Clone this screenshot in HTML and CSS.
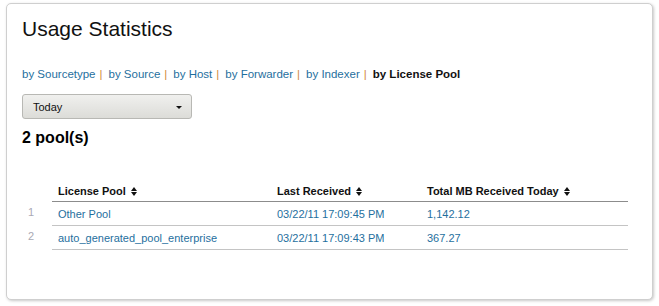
FILE: index.html
```html
<!DOCTYPE html>
<html lang="en">
<head>
  <meta charset="UTF-8">
  <title>Usage Statistics</title>
  <link rel="stylesheet" href="styles.css">
</head>
<body>
  <div class="panel">
    <h1>Usage Statistics</h1>

    <div class="views"><a href="#">by Sourcetype</a><span class="sep">|</span><a href="#">by Source</a><span class="sep">|</span><a href="#">by Host</a><span class="sep">|</span><a href="#">by Forwarder</a><span class="sep">|</span><a href="#">by Indexer</a><span class="sep">|</span><span class="current">by License Pool</span></div>

    <div class="dropdown">
      <span>Today</span>
      <span class="caret"></span>
    </div>

    <h2>2 pool(s)</h2>

    <table class="results">
      <thead>
        <tr>
          <th class="num"></th>
          <th class="c1">License Pool <svg class="sort" width="6" height="9" viewBox="0 0 6 9"><path d="M0 4L3 0L6 4Z M0 5L3 9L6 5Z" fill="#111"/></svg></th>
          <th class="c2">Last Received <svg class="sort" width="6" height="9" viewBox="0 0 6 9"><path d="M0 4L3 0L6 4Z M0 5L3 9L6 5Z" fill="#111"/></svg></th>
          <th class="c3">Total MB Received Today <svg class="sort" width="6" height="9" viewBox="0 0 6 9"><path d="M0 4L3 0L6 4Z M0 5L3 9L6 5Z" fill="#111"/></svg></th>
        </tr>
      </thead>
      <tbody>
        <tr>
          <td class="num">1</td>
          <td>Other Pool</td>
          <td>03/22/11 17:09:45 PM</td>
          <td>1,142.12</td>
        </tr>
        <tr>
          <td class="num">2</td>
          <td>auto_generated_pool_enterprise</td>
          <td>03/22/11 17:09:43 PM</td>
          <td>367.27</td>
        </tr>
      </tbody>
    </table>
  </div>
</body>
</html>
```
FILE: styles.css
```css
body {
  margin: 0;
  padding: 3px 6px 6px 6px;
  font-family: 'Liberation Sans', Arial, sans-serif;
  background: #fff;
  color: #000;
}

.panel {
  height: 297px;
  box-sizing: border-box;
  background: #fff;
  border: 1px solid #cfcfcf;
  border-radius: 5px;
  box-shadow: 1px 1px 3px rgba(0, 0, 0, 0.22);
  padding: 13px 15px 0 15px;
}

h1 {
  font-size: 21px;
  font-weight: normal;
  margin: 0;
  line-height: 24px;
  color: #111;
}

.views {
  margin-top: 26px;
  font-size: 11.5px;
  line-height: 14px;
}

.views a {
  color: #1f6f9e;
  text-decoration: none;
}

.sep {
  color: #d1893a;
  margin: 0 6px 0 4px;
}

.current {
  font-weight: bold;
  color: #111;
}

.dropdown {
  margin-top: 13px;
  width: 170px;
  height: 25px;
  box-sizing: border-box;
  border: 1px solid #b8b8b4;
  border-radius: 3px;
  background: linear-gradient(180deg, #f0f0ee 0%, #dcdcd8 100%);
  display: flex;
  align-items: center;
  justify-content: space-between;
  padding: 0 9px 0 10px;
  font-size: 11px;
  color: #111;
}

.caret {
  width: 0;
  height: 0;
  border-left: 3px solid transparent;
  border-right: 3px solid transparent;
  border-top: 3px solid #111;
  margin-top: 1px;
}

h2 {
  font-size: 16px;
  font-weight: bold;
  margin: 9px 0 0 0;
  line-height: 20px;
}

.results {
  margin-top: 37px;
  width: 606px;
  border-collapse: collapse;
  font-size: 11px;
}

.results th {
  text-align: left;
  font-weight: bold;
  color: #111;
  padding: 0 0 3px 6px;
  height: 13px;
  line-height: 13px;
  border-bottom: 1px solid #8c8c8c;
}

.results th.num {
  border-bottom: none;
}

.results td {
  color: #1f6f9e;
  padding: 0 0 0 6px;
  height: 23px;
  border-bottom: 1px solid #c4c4c4;
}

.results td.num {
  border-bottom: none;
  color: #a9a9b4;
  width: 24px;
  padding: 0 0 3px 6px;
  height: 20px;
}

.c1 { width: 213px; }
.c2 { width: 144px; }

.sort {
  margin-left: 2px;
  vertical-align: -1px;
}
```
